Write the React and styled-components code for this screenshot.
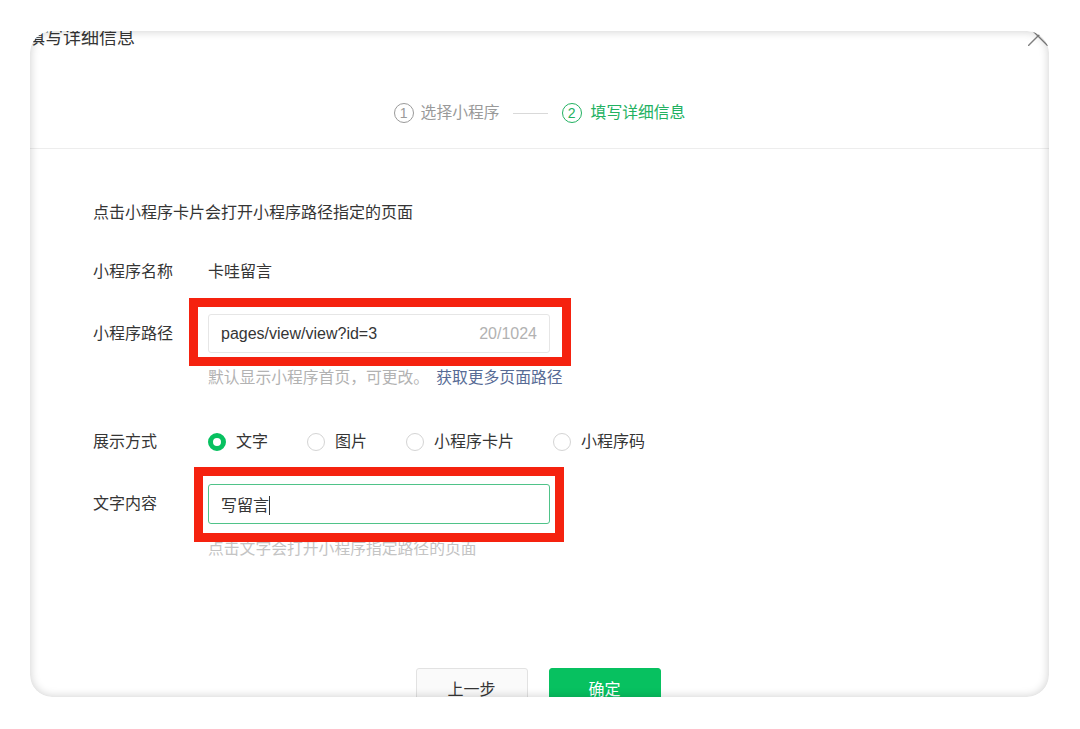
import React from "react";
import styled, { createGlobalStyle } from "styled-components";

const GREEN = "#07c160";
const TEXT = "#353535";
const MUTED = "#b2b2b2";
const RED = "#f5220f";
const FONT = `"Liberation Sans", "Noto Sans CJK SC", sans-serif`;

const GlobalStyle = createGlobalStyle`
  html, body {
    margin: 0;
    padding: 0;
    background: #ffffff;
    font-family: ${FONT};
  }
`;

const Page = styled.div`
  width: 1080px;
  height: 729px;
  padding: 31px 0 0 30px;
  box-sizing: border-box;
`;

const Frame = styled.div`
  position: relative;
  width: 1019px;
  height: 666px;
  border-radius: 22px;
  overflow: hidden;
  background: #ffffff;

  &::after {
    content: "";
    position: absolute;
    inset: 0;
    border-radius: 22px;
    box-shadow: inset 0 0 9px 1px rgba(0, 0, 0, 0.17);
    pointer-events: none;
  }
`;

const Title = styled.h2`
  margin: -2px 0 0 -3px;
  font-size: 18px;
  line-height: 18px;
  font-weight: 400;
  color: ${TEXT};
`;

const CloseButton = styled.button`
  position: absolute;
  top: -5px;
  right: 1px;
  width: 20px;
  height: 20px;
  padding: 0;
  border: none;
  background: transparent;
  color: #7f7f7f;
`;

const Steps = styled.div`
  display: flex;
  align-items: center;
  justify-content: center;
  padding: 56px 0 25px;
  border-bottom: 1px solid #ededed;
`;

const Step = styled.div`
  display: flex;
  align-items: center;
  font-size: 15.8px;
  line-height: 20px;
  color: ${(p) => (p.$active ? "#22b161" : "#9a9a9a")};
`;

const StepNum = styled.span`
  width: 18px;
  height: 18px;
  border-radius: 50%;
  border: 1px solid currentColor;
  display: flex;
  align-items: center;
  justify-content: center;
  font-size: 14px;
  margin-right: ${(p) => (p.$active ? "9px" : "7px")};
`;

const StepLine = styled.span`
  width: 35px;
  height: 1px;
  background: #d9d9d9;
  margin: 0 14px 0 13px;
`;

const Form = styled.div`
  padding-left: 63px;
`;

const Intro = styled.p`
  margin: 53px 0 0;
  font-size: 16px;
  line-height: 22px;
  color: ${TEXT};
`;

const Row = styled.div`
  display: grid;
  grid-template-columns: 115px auto;
  justify-content: start;
  align-items: center;
  margin-top: ${(p) => p.$gap}px;
`;

const Label = styled.span`
  font-size: 16px;
  line-height: 22px;
  color: ${TEXT};
`;

const Value = styled.span`
  font-size: 16px;
  line-height: 22px;
  color: ${TEXT};
`;

const Field = styled.div`
  position: relative;
  width: 342px;
  height: ${(p) => p.$h}px;
  box-sizing: border-box;
  border: 1px solid ${(p) => (p.$focus ? "#4fc389" : "#e6e6e6")};
  border-radius: 3px;
  display: flex;
  align-items: center;
  justify-content: space-between;
  padding: 0 12px;
  font-size: 16px;
  color: ${TEXT};
`;

const Counter = styled.span`
  color: ${MUTED};
  font-size: 16px;
`;

const Caret = styled.span`
  display: inline-block;
  width: 1px;
  height: 19px;
  background: ${TEXT};
  vertical-align: -4px;
`;

const Highlight = styled.span`
  position: absolute;
  top: ${(p) => p.$t}px;
  right: ${(p) => p.$r}px;
  bottom: ${(p) => p.$b}px;
  left: ${(p) => p.$l}px;
  border: 9px solid ${RED};
  pointer-events: none;
`;

const Hint = styled.div`
  margin: 15px 0 0 115px;
  font-size: 15.8px;
  line-height: 20px;
  color: ${(p) => (p.$light ? "#c4c4c4" : MUTED)};
`;

const Link = styled.a`
  color: #576b95;
  margin-left: 7px;
  text-decoration: none;
`;

const Radios = styled.div`
  display: flex;
  align-items: center;
  white-space: nowrap;
`;

const Radio = styled.label`
  display: flex;
  align-items: center;
  font-size: 16px;
  line-height: 22px;
  color: ${TEXT};
  margin-right: 39px;
`;

const Dot = styled.span`
  flex: none;
  width: 18px;
  height: 18px;
  box-sizing: border-box;
  border-radius: 50%;
  border: ${(p) => (p.$on ? `5px solid ${GREEN}` : "1px solid #d4d4d4")};
  background: #ffffff;
  margin-right: 10px;
`;

const Buttons = styled.div`
  display: flex;
  justify-content: center;
  gap: 21px;
  margin-top: 109px;
  padding-right: 3px;
`;

const Button = styled.button`
  width: 112px;
  height: 40px;
  border-radius: 3px;
  font-family: ${FONT};
  font-size: 16px;
  border: 1px solid ${(p) => (p.$primary ? GREEN : "#e2e2e2")};
  background: ${(p) => (p.$primary ? GREEN : "#fafafa")};
  color: ${(p) => (p.$primary ? "#ffffff" : TEXT)};
`;

const modes = ["文字", "图片", "小程序卡片", "小程序码"];

export default function App() {
  return (
    <Page>
      <GlobalStyle />
      <Frame>
        <Title>填写详细信息</Title>
        <CloseButton>
          <svg width="20" height="20" viewBox="0 0 20 20">
            <path d="M0 0 L20 20 M20 0 L0 20" stroke="currentColor" strokeWidth="1.4" fill="none" />
          </svg>
        </CloseButton>

        <Steps>
          <Step>
            <StepNum>1</StepNum>选择小程序
          </Step>
          <StepLine />
          <Step $active>
            <StepNum $active>2</StepNum>填写详细信息
          </Step>
        </Steps>

        <Form>
          <Intro>点击小程序卡片会打开小程序路径指定的页面</Intro>

          <Row $gap={37}>
            <Label>小程序名称</Label>
            <Value>卡哇留言</Value>
          </Row>

          <Row $gap={31}>
            <Label>小程序路径</Label>
            <Field $h={39}>
              <span>pages/view/view?id=3</span>
              <Counter>20/1024</Counter>
              <Highlight $t={-17} $r={-22} $b={-14} $l={-20} />
            </Field>
          </Row>
          <Hint>
            默认显示小程序首页，可更改。<Link>获取更多页面路径</Link>
          </Hint>

          <Row $gap={43}>
            <Label>展示方式</Label>
            <Radios>
              {modes.map((m, i) => (
                <Radio key={m}>
                  <Dot $on={i === 0} />
                  {m}
                </Radio>
              ))}
            </Radios>
          </Row>

          <Row $gap={31}>
            <Label>文字内容</Label>
            <Field $h={40} $focus>
              <span>
                写留言<Caret />
              </span>
              <Highlight $t={-18} $r={-15} $b={-19} $l={-15} />
            </Field>
          </Row>
          <Hint $light>点击文字会打开小程序指定路径的页面</Hint>
        </Form>

        <Buttons>
          <Button>上一步</Button>
          <Button $primary>确定</Button>
        </Buttons>
      </Frame>
    </Page>
  );
}
